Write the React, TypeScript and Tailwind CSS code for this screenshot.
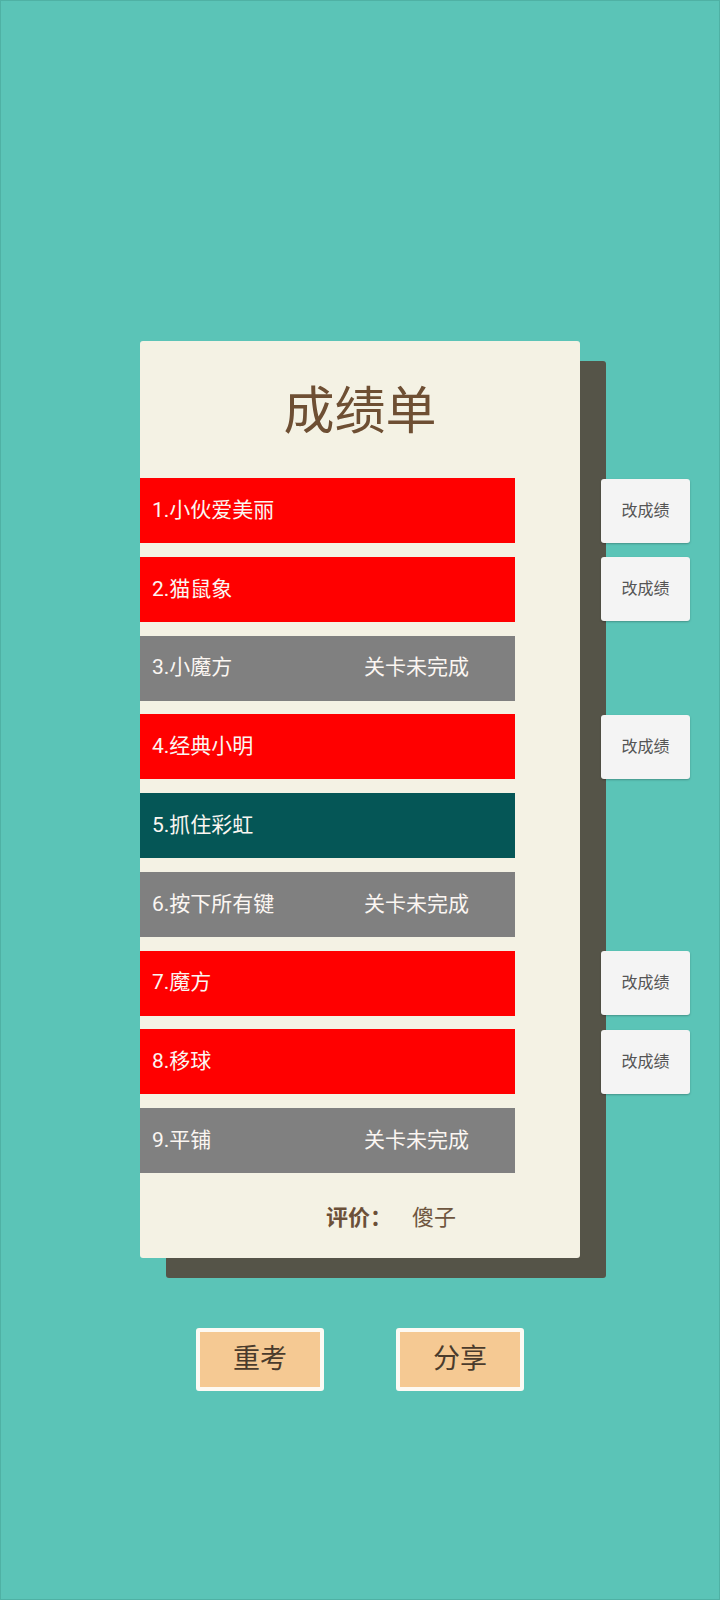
import React from "react";

type Row = { name: string; kind: "red" | "gray" | "teal" };

const rows: Row[] = [
  { name: "1.小伙爱美丽", kind: "red" },
  { name: "2.猫鼠象", kind: "red" },
  { name: "3.小魔方", kind: "gray" },
  { name: "4.经典小明", kind: "red" },
  { name: "5.抓住彩虹", kind: "teal" },
  { name: "6.按下所有键", kind: "gray" },
  { name: "7.魔方", kind: "red" },
  { name: "8.移球", kind: "red" },
  { name: "9.平铺", kind: "gray" },
];

const bg: Record<Row["kind"], string> = {
  red: "bg-[#ff0000]",
  gray: "bg-[#808080]",
  teal: "bg-[#055656]",
};

export default function App() {
  return (
    <div
      className="w-[720px] h-[1600px] bg-[#5bc4b7] border border-[#4fb1a4] flex flex-col items-center pt-[340px]"
      style={{ fontFamily: 'Roboto, "Noto Sans CJK SC", sans-serif' }}
    >
      <div className="w-[440px] h-[917px] bg-[#f4f2e4] rounded-[3px] shadow-[26px_20px_0_0_#555448] flex flex-col">
        <div className="h-[137px] flex items-center justify-center pt-[3px] text-[51px] text-[#6e4f33] leading-none">
          成绩单
        </div>
        <div className="flex flex-col gap-[13.75px]">
          {rows.map((r) => (
            <div key={r.name} className="flex items-center h-[65px]">
              <div
                className={`w-[375px] h-[65px] shrink-0 flex items-center pl-[12px] text-[21px] text-[#fbf6f2] ${bg[r.kind]}`}
              >
                <span className="w-[212px] shrink-0">{r.name}</span>
                {r.kind === "gray" && <span>关卡未完成</span>}
              </div>
              {r.kind === "red" && (
                <div className="ml-[86px] shrink-0 w-[89px] h-[64px] rounded-[3px] bg-[#f4f4f4] shadow-[0_1px_2px_rgba(0,0,0,0.25)] flex items-center justify-center text-[16px] text-[#555555]">
                  改成绩
                </div>
              )}
            </div>
          ))}
        </div>
        <div className="h-[84px] flex items-center pl-[186px] pt-[4px] text-[22px] text-[#6b5038]">
          <span className="font-bold">评价：</span>
          <span className="ml-[20px] text-[#6e563f]">傻子</span>
        </div>
      </div>
      <div className="flex gap-[72px] mt-[70px]">
        <div className="w-[128px] h-[63px] rounded-[3px] border-4 border-[#fdfaf4] bg-[#f5c993] flex items-center justify-center text-[27px] text-[#4a3b2c]">
          重考
        </div>
        <div className="w-[128px] h-[63px] rounded-[3px] border-4 border-[#fdfaf4] bg-[#f5c993] flex items-center justify-center text-[27px] text-[#4a3b2c]">
          分享
        </div>
      </div>
    </div>
  );
}
